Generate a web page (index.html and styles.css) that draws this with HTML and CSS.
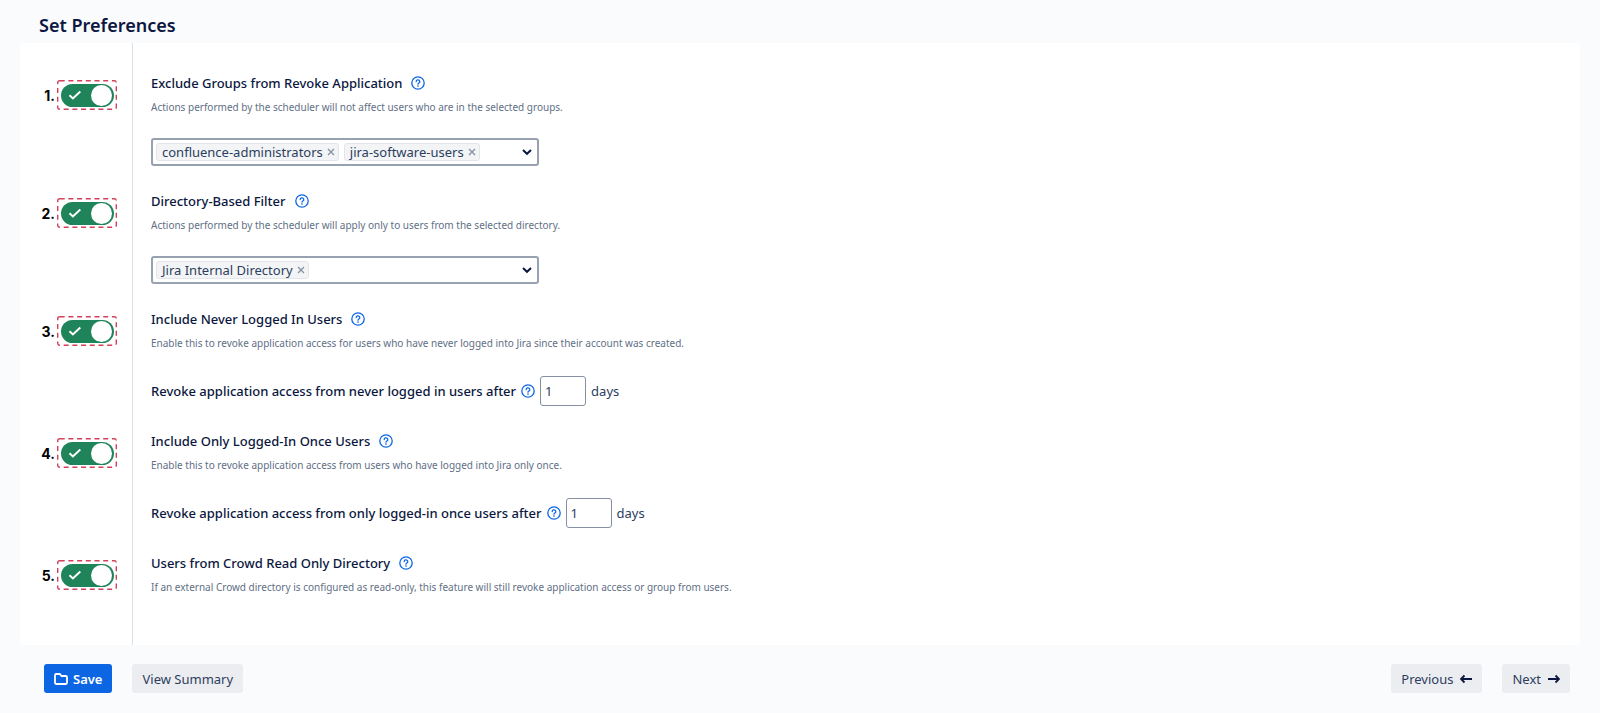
FILE: index.html
```html
<!DOCTYPE html>
<html lang="en">
  <head>
    <meta charset="UTF-8" />
    <meta name="viewport" content="width=device-width, initial-scale=1.0" />
    <title>Set Preferences</title>
    <link rel="stylesheet" href="styles.css">
  </head>

  <body>
    <!-- shared icons -->
    <svg class="sprite" aria-hidden="true">
      <symbol id="help" viewBox="0 0 14 14">
        <circle cx="7" cy="7" r="6.2" fill="none" stroke="currentColor" stroke-width="1.3" />
        <path d="M5.2 5.6a1.8 1.7 0 1 1 2.7 1.4c-.6.4-.9.6-.9 1.2" fill="none" stroke="currentColor" stroke-width="1.3" stroke-linecap="round" />
        <circle cx="7" cy="10.1" r=".8" fill="currentColor" />
      </symbol>
      <symbol id="frame" viewBox="0 0 60 30">
        <rect x=".7" y=".7" width="58.600" height="28.600" rx="2" fill="none" stroke="currentColor" stroke-width="1.4" stroke-dasharray="5 3.7" />
      </symbol>
      <symbol id="check" viewBox="0 0 14 10">
        <path d="M1.5 5.3l3.4 3.2 7.4-7" fill="none" stroke="currentColor" stroke-width="2" />
      </symbol>
      <symbol id="close" viewBox="0 0 8 8">
        <path d="M1 1l6 6M7 1L1 7" fill="none" stroke="currentColor" stroke-width="1.3" />
      </symbol>
      <symbol id="chevron" viewBox="0 0 10 8">
        <path d="M1 2L5 5.8 9 2" fill="none" stroke="currentColor" stroke-width="2" />
      </symbol>
      <symbol id="arrow" viewBox="0 0 12 10">
        <path d="M0 5h11M7.500 1.500l3.500 3.500-3.500 3.500" fill="none" stroke="currentColor" stroke-width="1.8" />
      </symbol>
    </svg>

    <h1 class="page-title">Set Preferences</h1>

    <form id="preferences" class="panel">
      <section class="row">
        <div class="switch">
          <span class="number">1.</span>
          <span class="toggle">
            <svg class="toggle-frame"><use href="#frame" /></svg>
            <input type="checkbox" id="exclude-groups" checked />
            <svg class="toggle-check"><use href="#check" /></svg>
          </span>
        </div>
        <div class="setting">
          <div class="heading">
            <label for="exclude-groups">Exclude Groups from Revoke Application</label>
            <button type="button" class="help" aria-label="Help"><svg><use href="#help" /></svg></button>
          </div>
          <p class="description">Actions performed by the scheduler will not affect users who are in the selected groups.</p>
          <div class="multi-select">
            <span class="chip">confluence-administrators <button type="button" aria-label="Remove"><svg><use href="#close" /></svg></button></span>
            <span class="chip">jira-software-users <button type="button" aria-label="Remove"><svg><use href="#close" /></svg></button></span>
            <input type="text" aria-label="Groups" />
            <button type="button" class="open" aria-label="Open"><svg><use href="#chevron" /></svg></button>
          </div>
        </div>
      </section>

      <section class="row">
        <div class="switch">
          <span class="number">2.</span>
          <span class="toggle">
            <svg class="toggle-frame"><use href="#frame" /></svg>
            <input type="checkbox" id="directory-filter" checked />
            <svg class="toggle-check"><use href="#check" /></svg>
          </span>
        </div>
        <div class="setting">
          <div class="heading">
            <label for="directory-filter">Directory-Based Filter</label>
            <button type="button" class="help" aria-label="Help"><svg><use href="#help" /></svg></button>
          </div>
          <p class="description">Actions performed by the scheduler will apply only to users from the selected directory.</p>
          <div class="multi-select">
            <span class="chip">Jira Internal Directory <button type="button" aria-label="Remove"><svg><use href="#close" /></svg></button></span>
            <input type="text" aria-label="Directories" />
            <button type="button" class="open" aria-label="Open"><svg><use href="#chevron" /></svg></button>
          </div>
        </div>
      </section>

      <section class="row">
        <div class="switch">
          <span class="number">3.</span>
          <span class="toggle">
            <svg class="toggle-frame"><use href="#frame" /></svg>
            <input type="checkbox" id="never-logged-in" checked />
            <svg class="toggle-check"><use href="#check" /></svg>
          </span>
        </div>
        <div class="setting">
          <div class="heading">
            <label for="never-logged-in">Include Never Logged In Users</label>
            <button type="button" class="help" aria-label="Help"><svg><use href="#help" /></svg></button>
          </div>
          <p class="description">Enable this to revoke application access for users who have never logged into Jira since their account was created.</p>
          <div class="days">
            <label for="never-days">Revoke application access from never logged in users after</label>
            <button type="button" class="help" aria-label="Help"><svg><use href="#help" /></svg></button>
            <input type="text" id="never-days" inputmode="numeric" value="1" />
            <span>days</span>
          </div>
        </div>
      </section>

      <section class="row">
        <div class="switch">
          <span class="number">4.</span>
          <span class="toggle">
            <svg class="toggle-frame"><use href="#frame" /></svg>
            <input type="checkbox" id="logged-in-once" checked />
            <svg class="toggle-check"><use href="#check" /></svg>
          </span>
        </div>
        <div class="setting">
          <div class="heading">
            <label for="logged-in-once">Include Only Logged-In Once Users</label>
            <button type="button" class="help" aria-label="Help"><svg><use href="#help" /></svg></button>
          </div>
          <p class="description">Enable this to revoke application access from users who have logged into Jira only once.</p>
          <div class="days">
            <label for="once-days">Revoke application access from only logged-in once users after</label>
            <button type="button" class="help" aria-label="Help"><svg><use href="#help" /></svg></button>
            <input type="text" id="once-days" inputmode="numeric" value="1" />
            <span>days</span>
          </div>
        </div>
      </section>

      <section class="row">
        <div class="switch">
          <span class="number">5.</span>
          <span class="toggle">
            <svg class="toggle-frame"><use href="#frame" /></svg>
            <input type="checkbox" id="crowd-users" checked />
            <svg class="toggle-check"><use href="#check" /></svg>
          </span>
        </div>
        <div class="setting">
          <div class="heading">
            <label for="crowd-users">Users from Crowd Read Only Directory</label>
            <button type="button" class="help" aria-label="Help"><svg><use href="#help" /></svg></button>
          </div>
          <p class="description">If an external Crowd directory is configured as read-only, this feature will still revoke application access or group from users.</p>
        </div>
      </section>
    </form>

    <footer class="actions">
      <button type="submit" form="preferences" class="btn primary">
        <svg class="folder" viewBox="0 0 14 12"><path d="M1 2.200Q1 1 2.200 1H5.800L7.500 3H11.800Q13 3 13 4.200V9.800Q13 11 11.800 11H2.200Q1 11 1 9.800Z" fill="none" stroke="currentColor" stroke-width="1.8" /></svg>
        Save
      </button>
      <button type="button" class="btn">View Summary</button>
      <button type="button" class="btn previous">Previous <svg class="arrow flip"><use href="#arrow" /></svg></button>
      <button type="button" class="btn">Next <svg class="arrow"><use href="#arrow" /></svg></button>
    </footer>
  </body>
</html>
```
FILE: styles.css
```css
* {
  margin: 0;
  padding: 0;
  box-sizing: border-box;
}
:root {
  --page-background: #fafbfd;
  --panel-background: #fff;
  --line: #dcdfe5;
  --text: #2c3e5d;
  --heading: #0b1740;
  --muted: #626f86;
  --field-border: #8590a2;
  --blue: #0c66e4;
  --green: #1f845a;
}
body {
  min-height: 100vh;
  padding: 11px 20px 20px;
  background-color: var(--page-background);
  color: var(--text);
  font-family: "Segoe UI", "Noto Sans", sans-serif;
  font-size: 13px;
}
button,
input {
  font: inherit;
  color: inherit;
}
button {
  border: none;
  background: none;
  cursor: pointer;
}
svg {
  display: block;
}
.sprite {
  display: none;
}
.page-title {
  padding-left: 19px;
  font-size: 18px;
  line-height: 28px;
  font-weight: 600;
  color: var(--heading);
  margin-bottom: 4px;
}

/* panel */
.panel {
  display: flex;
  flex-direction: column;
  background: linear-gradient(var(--line), var(--line)) 112px 0 / 1px 100% no-repeat var(--panel-background);
  padding: 28px 0 46px;
  gap: 23px;
}
.row {
  display: flex;
  gap: 34px;
}
.switch {
  display: flex;
  align-items: center;
  justify-content: flex-end;
  gap: 2px;
  flex: none;
  width: 97px;
  height: 30px;
  margin-top: 9px;
}
.number {
  font-family: Inter, sans-serif;
  font-size: 14px;
  font-weight: 700;
  color: #000;
}
.toggle {
  position: relative;
  display: flex;
  align-items: center;
  justify-content: center;
  width: 60px;
  height: 30px;
}
.toggle-frame {
  position: absolute;
  inset: 0;
  width: 60px;
  height: 30px;
  color: #d2405a;
}
.toggle input {
  appearance: none;
  position: relative;
  width: 53px;
  height: 23px;
  border-radius: 12px;
  background-color: var(--green);
  cursor: pointer;
}
.toggle input::before {
  content: "";
  position: absolute;
  top: 1px;
  right: 2px;
  width: 21px;
  height: 21px;
  border-radius: 50%;
  background-color: #fff;
}
.toggle-check {
  position: absolute;
  left: 11px;
  top: 10px;
  width: 14px;
  height: 10px;
  color: #fff;
  pointer-events: none;
}
.heading {
  display: flex;
  align-items: center;
  gap: 9px;
  height: 24px;
}
.heading label,
.days label {
  font-weight: 500;
  color: var(--heading);
}
.help svg {
  width: 14px;
  height: 14px;
  color: var(--blue);
}
.description {
  font-size: 10px;
  line-height: 24px;
  color: var(--muted);
}
.multi-select {
  display: flex;
  align-items: center;
  gap: 5px;
  width: 388px;
  height: 28px;
  margin-top: 19px;
  padding: 0 5px 0 3px;
  border: 2px solid #98a1b0;
  border-radius: 3px;
}
.multi-select input {
  flex: 1;
  min-width: 0;
  border: none;
  outline: none;
}
.chip {
  display: flex;
  align-items: center;
  gap: 4px;
  height: 18px;
  padding: 0 3px 0 5px;
  border: 1px solid #e3e5ea;
  border-radius: 3px;
  background-color: #f3f4f6;
  line-height: 16px;
  white-space: nowrap;
}
.chip svg {
  width: 8px;
  height: 8px;
  color: #8590a2;
}
.open svg {
  width: 10px;
  height: 8px;
  color: var(--heading);
}
.days {
  display: flex;
  align-items: center;
  gap: 5px;
  height: 30px;
  margin-top: 21px;
}
.days input {
  width: 46px;
  height: 30px;
  padding: 0 4px;
  border: 1px solid var(--field-border);
  border-radius: 3px;
}

/* buttons */
.actions {
  display: flex;
  gap: 20px;
  padding: 19px 10px 0 24px;
}
.btn {
  display: flex;
  align-items: center;
  gap: 7px;
  height: 29px;
  padding: 0 10px;
  border-radius: 3px;
  background-color: #ecedf1;
}
.btn.primary {
  gap: 5px;
  background-color: var(--blue);
  color: #fff;
  font-weight: 600;
}
.btn.previous {
  margin-left: auto;
}
.folder {
  width: 14px;
  height: 12px;
}
.arrow {
  width: 12px;
  height: 10px;
  color: var(--heading);
}
.flip {
  transform: scaleX(-1);
}
```
